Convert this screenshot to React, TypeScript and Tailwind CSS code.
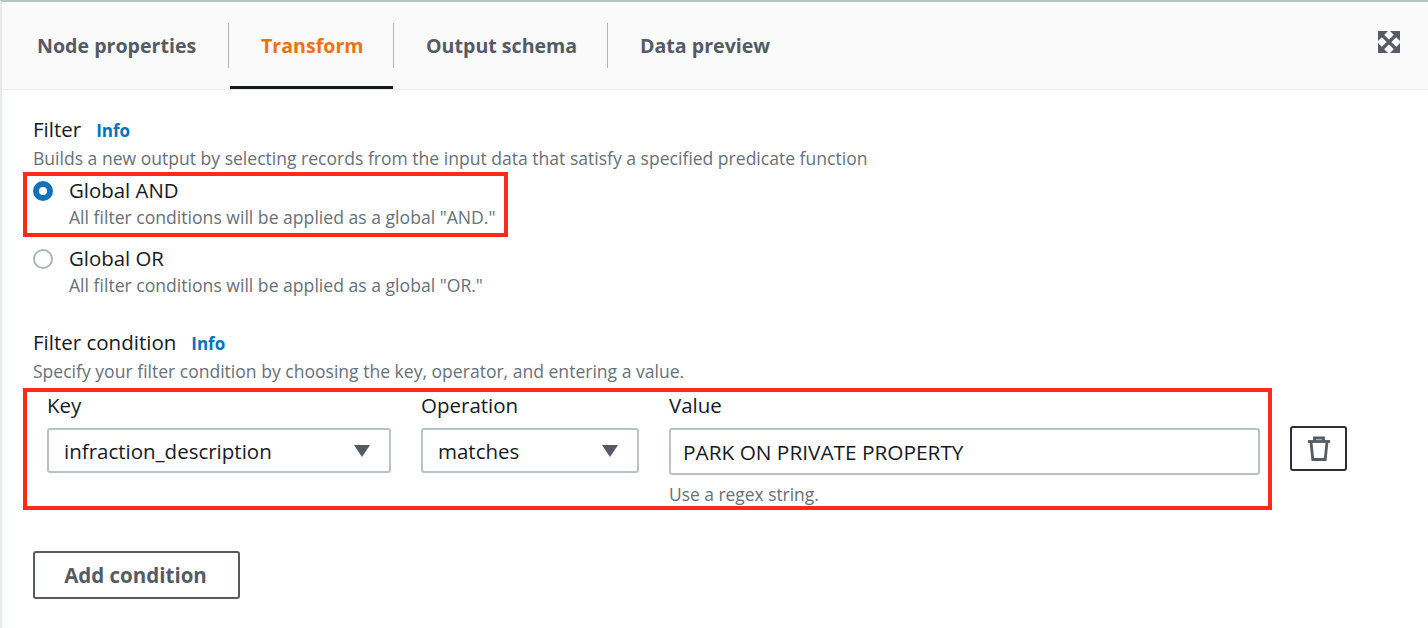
const tabs = [
  { label: 'Node properties', active: false, width: 'w-[227px]', pad: 'pl-[35px]' },
  { label: 'Transform', active: true, width: 'w-[165px]', pad: 'pl-[32px]' },
  { label: 'Output schema', active: false, width: 'w-[214px]', pad: 'pl-[32px]' },
  { label: 'Data preview', active: false, width: 'w-[200px]', pad: 'pl-[32px]' },
];

function ExpandIcon() {
  return (
    <svg width="22" height="22" viewBox="0 0 22 22">
      <rect width="22" height="22" fill="#fff" />
      <path d="M0 0h10L0 10zM22 0v10L12 0zM0 22V12l10 10zM22 22H12l10-10z" fill="#545b64" />
      <path d="M3 3l16 16M19 3L3 19" stroke="#545b64" strokeWidth="3.2" />
    </svg>
  );
}

function TrashIcon() {
  return (
    <svg width="24" height="26" viewBox="0 0 24 26" fill="none" stroke="#545b64" strokeWidth="2.8">
      <path d="M1 5.500h22" />
      <path d="M7.500 5V2h9v3" />
      <path d="M4 6l1.800 17.500h12.400L20 6" />
    </svg>
  );
}

function Radio({ checked, title, description }: { checked: boolean; title: string; description: string }) {
  return (
    <div className="flex">
      <div className="w-[36px] pt-[5px]">
        {checked ? (
          <div className="h-[20px] w-[20px] rounded-full border-[6px] border-[#0f73bb] bg-white" />
        ) : (
          <div className="h-[20px] w-[20px] rounded-full border-2 border-[#aab7b8] bg-white" />
        )}
      </div>
      <div>
        <div className="text-[20.400px] leading-[28px] text-[#16191f]">{title}</div>
        <div className="mt-[1px] text-[17.600px] leading-[25px] text-[#687078]">{description}</div>
      </div>
    </div>
  );
}

function SelectBox({ value, width }: { value: string; width: string }) {
  return (
    <div className={`flex h-[45px] items-center justify-between rounded-[3px] border-2 border-[#b6c2c3] bg-white pl-[15px] pr-[18px] ${width}`}>
      <span className="pt-[2px] text-[20.500px] text-[#16191f]">{value}</span>
      <svg width="18" height="14" viewBox="0 0 18 14">
        <path d="M1 1h16L9 13z" fill="#545b64" />
      </svg>
    </div>
  );
}

export default function App() {
  return (
    <div className="h-[628px] w-[1428px] overflow-hidden border-l-2 border-t-2 border-l-[#e6eaea] border-t-[#b5c3c3] bg-white font-['Open_Sans',sans-serif]">
      {/* Tab bar */}
      <div className="flex h-[88px] items-start justify-between border-b border-[#eaeded] bg-[#fafafa] pr-[28px]">
        <div className="flex h-[87px]">
          {tabs.map((tab, index) => (
            <div key={tab.label} className={`relative flex h-full items-center ${tab.width} ${tab.pad}`}>
              <span className={`text-[19.600px] font-bold ${tab.active ? 'text-[#ec7211]' : 'text-[#545b64]'}`}>{tab.label}</span>
              {index < 3 && <div className="absolute right-0 top-[21px] h-[45px] w-px bg-[#aab7b8]" />}
              {tab.active && <div className="absolute bottom-0 left-[1px] right-[1px] h-[3px] bg-[#16191f]" />}
            </div>
          ))}
        </div>
        <div className="pt-[29px]">
          <ExpandIcon />
        </div>
      </div>

      <div className="pl-[31px] pt-[25px]">
        {/* Filter */}
        <div className="flex items-center text-[20.500px] leading-[28px] text-[#16191f]">
          Filter
          <span className="ml-[15px] mt-[4px] text-[17px] leading-[20px] font-bold text-[#0073bb]">Info</span>
        </div>
        <div className="mt-[1px] text-[17.560px] leading-[28px] text-[#687078]">
          Builds a new output by selecting records from the input data that satisfy a specified predicate function
        </div>

        <div className="-ml-[10px] h-[65px] w-[485px] border-4 border-[#fb2a1a] pl-[6px]">
          <Radio checked title="Global AND" description={'All filter conditions will be applied as a global "AND."'} />
        </div>
        <div className="mt-[7px]">
          <Radio checked={false} title="Global OR" description={'All filter conditions will be applied as a global "OR."'} />
        </div>

        {/* Filter condition */}
        <div className="mt-[30px] flex items-center text-[20.500px] leading-[28px] text-[#16191f]">
          Filter condition
          <span className="ml-[15px] mt-[4px] text-[17px] leading-[20px] font-bold text-[#0073bb]">Info</span>
        </div>
        <div className="mt-[1px] text-[17.560px] leading-[28px] text-[#687078]">
          Specify your filter condition by choosing the key, operator, and entering a value.
        </div>

        <div className="mt-[3px] flex items-start">
          <div className="-ml-[10px] flex h-[122px] w-[1249px] gap-[30px] border-4 border-[#fb2a1a] pl-[20px]">
            <div>
              <div className="text-[20.500px] leading-[26px] text-[#16191f]">Key</div>
              <div className="mt-[10px]">
                <SelectBox value="infraction_description" width="w-[344px]" />
              </div>
            </div>
            <div>
              <div className="text-[20.500px] leading-[26px] text-[#16191f]">Operation</div>
              <div className="mt-[10px]">
                <SelectBox value="matches" width="w-[218px]" />
              </div>
            </div>
            <div>
              <div className="text-[20.500px] leading-[26px] text-[#16191f]">Value</div>
              <div className="mt-[10px] flex h-[47px] w-[591px] items-center rounded-[3px] border-2 border-[#b6c2c3] bg-white pl-[12px]">
                <span className="pt-[2px] text-[20.800px] text-[#16191f]">PARK ON PRIVATE PROPERTY</span>
              </div>
              <div className="mt-[7px] text-[17.400px] leading-[24px] text-[#687078]">Use a regex string.</div>
            </div>
          </div>
          <div className="ml-[18px] mt-[38px] flex h-[45px] w-[57px] items-center justify-center rounded-[3px] border-2 border-[#2b3038] bg-white">
            <TrashIcon />
          </div>
        </div>

        <div className="mt-[41px] flex h-[48px] w-[207px] items-center justify-center rounded-[3px] border-2 border-[#545b64] bg-white pr-[2px] text-[20.500px] font-bold text-[#545b64]">
          Add condition
        </div>
      </div>
    </div>
  );
}
